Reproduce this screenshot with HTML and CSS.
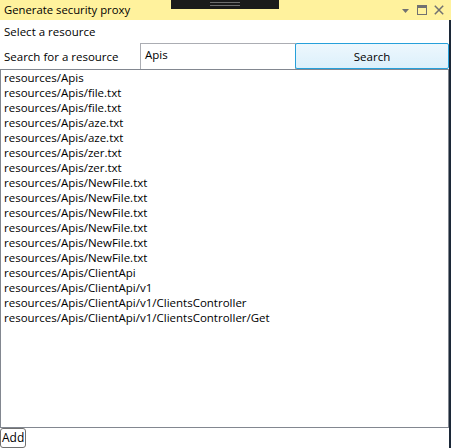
FILE: index.html
```html
<!DOCTYPE html>
<html>
<head>
<meta charset="utf-8">
<link rel="stylesheet" href="styles.css">
</head>
<body>
<div class="window">
  <div class="titlebar">
    <span class="title">Generate security proxy</span>
    <div class="grip"><span></span><span></span></div>
    <div class="tools">
      <svg width="9" height="9" viewBox="0 0 9 9"><path d="M1 3h7L4.5 7z" fill="#717171"/></svg>
      <svg width="10" height="10" viewBox="0 0 10 10"><rect x="0.5" y="0.5" width="9" height="9" fill="none" stroke="#717171"/><rect x="0" y="0" width="10" height="3" fill="#717171"/></svg>
      <svg width="10" height="10" viewBox="0 0 10 10"><path d="M0.8 0.8l8.4 8.4M9.2 0.8l-8.4 8.4" stroke="#717171" stroke-width="1.5"/></svg>
    </div>
  </div>
  <div class="body">
    <div class="label-row">Select a resource</div>
    <div class="search-row">
      <span class="search-label">Search for a resource</span>
      <div class="textbox">Apis</div>
      <div class="btn-search">Search</div>
    </div>
    <div class="listbox">
      <div class="item">resources/Apis</div>
      <div class="item">resources/Apis/file.txt</div>
      <div class="item">resources/Apis/file.txt</div>
      <div class="item">resources/Apis/aze.txt</div>
      <div class="item">resources/Apis/aze.txt</div>
      <div class="item">resources/Apis/zer.txt</div>
      <div class="item">resources/Apis/zer.txt</div>
      <div class="item">resources/Apis/NewFile.txt</div>
      <div class="item">resources/Apis/NewFile.txt</div>
      <div class="item">resources/Apis/NewFile.txt</div>
      <div class="item">resources/Apis/NewFile.txt</div>
      <div class="item">resources/Apis/NewFile.txt</div>
      <div class="item">resources/Apis/NewFile.txt</div>
      <div class="item">resources/Apis/ClientApi</div>
      <div class="item">resources/Apis/ClientApi/v1</div>
      <div class="item">resources/Apis/ClientApi/v1/ClientsController</div>
      <div class="item">resources/Apis/ClientApi/v1/ClientsController/Get</div>
    </div>
    <div class="footer"><div class="btn-add">Add</div></div>
  </div>
</div>
</body>
</html>
```
FILE: styles.css
```css
* { box-sizing: border-box; }
html, body { margin: 0; padding: 0; background: #fff; }
body {
  font-family: "Open Sans", "Noto Sans", sans-serif;
  font-size: 11.5px;
  color: #000;
}
.window {
  width: 451px;
  height: 448px;
  display: flex;
  flex-direction: column;
  overflow: hidden;
}
.titlebar {
  height: 20px;
  background: #FFF29D;
  display: flex;
  align-items: center;
  position: relative;
  padding-left: 4px;
  padding-right: 7px;
}
.title { flex: 1; line-height: 20px; font-size: 11.3px; }
.grip {
  position: absolute;
  left: 171px;
  top: 0;
  width: 108px;
  height: 9px;
  background: #1B1B1B;
  display: flex;
  flex-direction: column;
  align-items: center;
  padding-top: 2px;
  gap: 2px;
}
.grip span { display: block; width: 30px; height: 1px; background: #6E6E6E; }
.tools { display: flex; align-items: center; gap: 7px; }
.body {
  flex: 1;
  display: flex;
  flex-direction: column;
  border-right: 2px solid #1C2838;
}
.label-row { height: 23px; padding: 4px 0 0 4px; line-height: 16px; }
.search-row { height: 26px; display: flex; align-items: stretch; }
.search-label { width: 140px; padding-left: 4px; line-height: 28px; }
.textbox {
  width: 156px;
  border: 1px solid #ABADB3;
  border-bottom: none;
  padding: 2px 0 0 4px;
  line-height: 18px;
}
.btn-search {
  flex: 1;
  margin-left: -1px;
  border: 1px solid #26A0DA;
  border-radius: 2px;
  background: linear-gradient(#EDF7FD, #DCF0FB);
  text-align: center;
  line-height: 26px;
}
.listbox {
  flex: 1;
  border: 1px solid #828790;
  padding: 0 0 0 3px;
}
.item { height: 15px; line-height: 15px; }
.footer { height: 20px; }
.btn-add {
  display: inline-block;
  height: 20px;
  padding: 0 1px;
  border: 1px solid #707070;
  border-radius: 3px;
  line-height: 18px;
  font-size: 12px;
}
```
